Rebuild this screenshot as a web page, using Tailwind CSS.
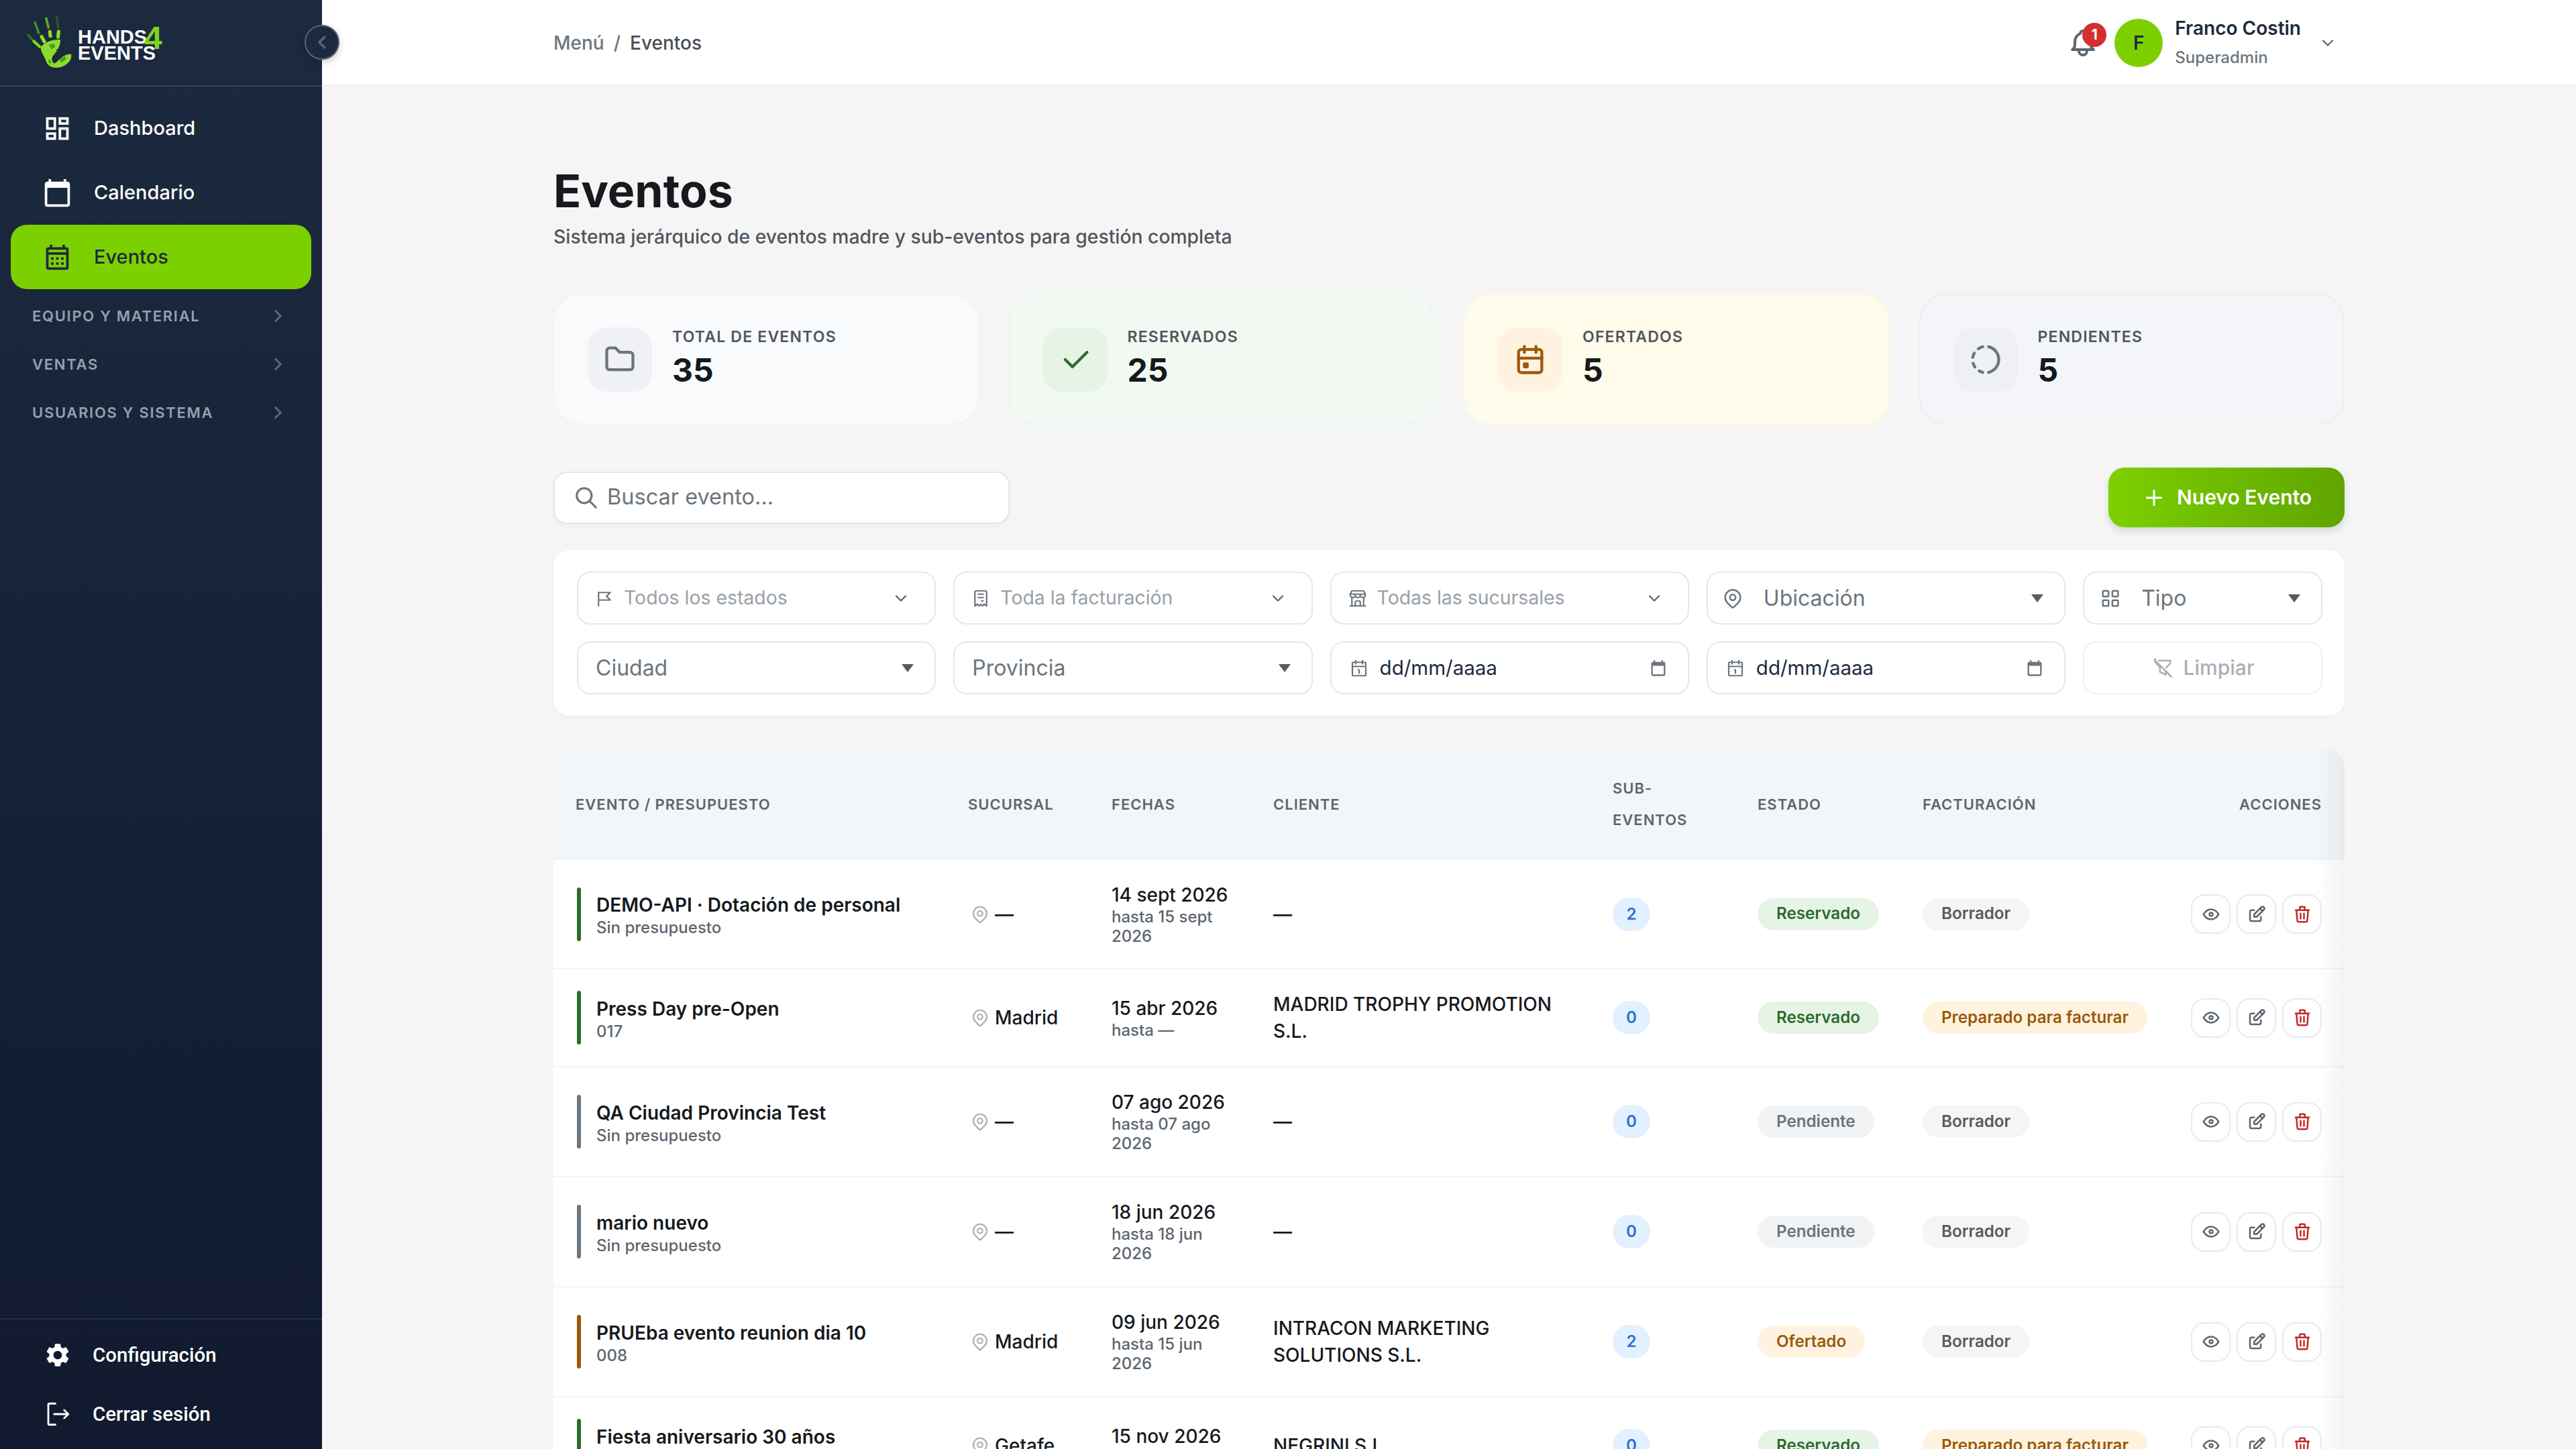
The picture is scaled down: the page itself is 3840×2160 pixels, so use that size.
<!DOCTYPE html>
<html lang="es">
<head>
<meta charset="utf-8">
<title>Eventos</title>
<script src="https://cdn.jsdelivr.net/npm/@tailwindcss/browser@4"></script>
</head>
<body class="w-[3840px] h-[2160px] overflow-hidden bg-[#f5f5f5] font-['Inter','Liberation_Sans',sans-serif] text-[#16191d]">
<svg class="hidden" xmlns="http://www.w3.org/2000/svg">
  <symbol id="bell" viewBox="0 0 24 24"><path d="M10 5a2 2 0 1 1 4 0a7 7 0 0 1 4 6v3a4 4 0 0 0 2 3h-16a4 4 0 0 0 2 -3v-3a7 7 0 0 1 4 -6"/><path d="M9 17v1a3 3 0 0 0 6 0v-1"/></symbol>
  <symbol id="chev" viewBox="0 0 24 24"><path d="M6 9l6 6l6 -6"/></symbol>
  <symbol id="chevr" viewBox="0 0 24 24"><path d="M9 6l6 6l-6 6"/></symbol>
  <symbol id="pin" viewBox="0 0 24 24"><path d="M9 11a3 3 0 1 0 6 0a3 3 0 0 0 -6 0"/><path d="M17.657 16.657l-4.243 4.243a2 2 0 0 1 -2.827 0l-4.244 -4.243a8 8 0 1 1 11.314 0z"/></symbol>
  <symbol id="eye" viewBox="0 0 24 24"><path d="M10 12a2 2 0 1 0 4 0a2 2 0 0 0 -4 0"/><path d="M21 12c-2.4 4 -5.4 6 -9 6c-3.6 0 -6.6 -2 -9 -6c2.4 -4 5.4 -6 9 -6c3.6 0 6.6 2 9 6"/></symbol>
  <symbol id="edit" viewBox="0 0 24 24"><path d="M9 7h-3a2 2 0 0 0 -2 2v9a2 2 0 0 0 2 2h9a2 2 0 0 0 2 -2v-3"/><path d="M9 15h3l8.5 -8.5a1.5 1.5 0 0 0 -3 -3l-8.5 8.5v3"/><path d="M16 5l3 3"/></symbol>
  <symbol id="trash" viewBox="0 0 24 24"><path d="M4 7l16 0"/><path d="M10 11l0 6"/><path d="M14 11l0 6"/><path d="M5 7l1 12a2 2 0 0 0 2 2h8a2 2 0 0 0 2 -2l1 -12"/><path d="M9 7v-3a1 1 0 0 1 1 -1h4a1 1 0 0 1 1 1v3"/></symbol>
  <symbol id="calnum" viewBox="0 0 24 24"><path d="M5 5h14a1 1 0 0 1 1 1v14a1 1 0 0 1 -1 1h-14a1 1 0 0 1 -1 -1v-14a1 1 0 0 1 1 -1z"/><path d="M16 3v4"/><path d="M8 3v4"/><path d="M4 10h16"/><path d="M11 14h1v4"/></symbol>
  <symbol id="caldark" viewBox="0 0 24 24"><path d="M19 4h-1V2h-2v2H8V2H6v2H5a2 2 0 0 0-2 2v14a2 2 0 0 0 2 2h14a2 2 0 0 0 2-2V6a2 2 0 0 0-2-2zm0 16H5V9h14v11z"/></symbol>
  <symbol id="tri" viewBox="0 0 20 14"><path d="M1 1h18l-9 12z"/></symbol>
</svg>

<div class="flex w-[3840px] h-[2160px]">
  <!-- Sidebar -->
  <aside class="relative z-10 flex flex-col w-[480px] h-full shrink-0 bg-linear-to-b from-[#1c2a3f] to-[#111a2e]">
    <div class="relative h-[129px] shrink-0 border-b-2 border-[#3a4350]">
      <div class="flex items-center h-[127px] pl-[36px]">
        <svg width="76" height="84" viewBox="108 66 222 246" class="shrink-0 -mt-[2px]" fill="none" stroke-linecap="round">
          <path d="M125 158L150 185" stroke="#2f7a1e" stroke-width="10"/>
          <path d="M150 185L175 208" stroke="#7fd321" stroke-width="13"/>
          <path d="M155 103L172 150" stroke="#3f9422" stroke-width="10" stroke-dasharray="12 6"/>
          <path d="M184 165L196 186" stroke="#8fdc2a" stroke-width="15"/>
          <path d="M204 85L214 125" stroke="#58ad22" stroke-width="11" stroke-dasharray="14 4"/>
          <path d="M220 143L222 162" stroke="#8fdc2a" stroke-width="15"/>
          <path d="M250 78L256 125" stroke="#2c5a1c" stroke-width="10" stroke-dasharray="10 5"/>
          <path d="M258 142L256 166" stroke="#8fdc2a" stroke-width="15"/>
          <path d="M180 210C200 185 240 175 266 178C268 195 255 225 240 240C225 255 225 270 240 282C260 270 275 240 312 240C320 265 295 290 265 298C235 305 212 295 205 275C198 250 180 235 180 210Z" fill="#8ddb2c"/>
          <path d="M215 200l22 -6l8 14l-18 12zM262 262l24 -12l6 12l-22 16zM212 262l12 6l2 14l-10 -2z" fill="#4f9e1f"/>
          <path d="M250 222l12 4M284 228l8 2M328 205l12 -8" stroke="#1b3a16" stroke-width="5"/>
        </svg>
        <div class="relative w-[140px] h-[60px] ml-[4px] font-['Liberation_Sans',sans-serif] font-bold text-white text-[29px] leading-[24px]">
          <div class="absolute left-0 top-[9px]">HANDS</div>
          <div class="absolute left-0 top-[33px]">EVENTS</div>
          <div class="absolute left-[99px] top-[-1px] text-[#7ed321] text-[48px] leading-[48px]">4</div>
        </div>
      </div>
      <div class="absolute left-[454px] top-[37px] flex items-center justify-center w-[52px] h-[52px] rounded-full bg-[#1c2a3f] border-2 border-[#5a6270] shadow-[0_4px_12px_rgba(0,0,0,0.2)]">
        <svg class="w-[32px] h-[32px] fill-none stroke-[#5e6675] stroke-[2.5]" viewBox="0 0 24 24" stroke-linecap="round" stroke-linejoin="round"><path d="M15 6l-6 6l6 6"/></svg>
      </div>
    </div>

    <nav class="flex flex-col pt-[14px] px-[16px]">
      <a class="flex items-center gap-[32px] h-[96px] pl-[47px] text-white text-[29px] font-medium">
        <svg class="w-[45px] h-[45px] fill-current" viewBox="0 0 24 24"><path d="M19 5v2h-4V5h4M9 5v6H5V5h4m10 8v6h-4v-6h4M9 17v2H5v-2h4M21 3h-8v6h8V3zM11 3H3v10h8V3zm10 8h-8v10h8V11zm-10 4H3v6h8v-6z"/></svg>
        Dashboard
      </a>
      <a class="flex items-center gap-[32px] h-[96px] pl-[47px] text-white text-[29px] font-medium">
        <svg class="w-[45px] h-[45px] fill-current" viewBox="0 0 24 24"><path d="M20 3h-1V1h-2v2H7V1H5v2H4c-1.1 0-2 .9-2 2v16c0 1.1.9 2 2 2h16c1.1 0 2-.9 2-2V5c0-1.1-.9-2-2-2zm0 18H4V8h16v13z"/></svg>
        Calendario
      </a>
      <a class="flex items-center gap-[32px] h-[96px] pl-[47px] rounded-[24px] bg-[#7dd000] text-[#1c2a3f] text-[29px] font-medium">
        <svg class="w-[45px] h-[45px] fill-current" viewBox="0 0 24 24"><path d="M19 4h-1V2h-2v2H8V2H6v2H5c-1.1 0-2 .9-2 2v14c0 1.1.9 2 2 2h14c1.1 0 2-.9 2-2V6c0-1.1-.9-2-2-2zm0 16H5V10h14v10zm0-12H5V6h14v2zM9 14H7v-2h2v2zm4 0h-2v-2h2v2zm4 0h-2v-2h2v2zm-8 4H7v-2h2v2zm4 0h-2v-2h2v2zm4 0h-2v-2h2v2z"/></svg>
        Eventos
      </a>
      <div class="mt-[4px] flex flex-col">
        <div class="flex items-center justify-between h-[72px] pl-[32px] pr-[33px] text-[#96a0ae] text-[22px] font-semibold tracking-[1.7px]">EQUIPO Y MATERIAL<svg class="w-[34px] h-[34px] fill-none stroke-[#5e6675] stroke-[2]"><use href="#chevr"/></svg></div>
        <div class="flex items-center justify-between h-[72px] pl-[32px] pr-[33px] text-[#96a0ae] text-[22px] font-semibold tracking-[1.7px]">VENTAS<svg class="w-[34px] h-[34px] fill-none stroke-[#5e6675] stroke-[2]"><use href="#chevr"/></svg></div>
        <div class="flex items-center justify-between h-[72px] pl-[32px] pr-[33px] text-[#96a0ae] text-[22px] font-semibold tracking-[1.7px]">USUARIOS Y SISTEMA<svg class="w-[34px] h-[34px] fill-none stroke-[#5e6675] stroke-[2]"><use href="#chevr"/></svg></div>
      </div>
    </nav>

    <div class="mt-auto border-t-2 border-[#263244] pt-[9px] pb-[8px]">
      <a class="flex items-center gap-[31px] h-[88px] pl-[65px] text-white text-[29.5px] font-medium font-['Roboto',sans-serif]">
        <svg class="w-[42px] h-[42px] fill-current" viewBox="0 0 24 24"><path d="M19.14 12.94c.04-.3.06-.61.06-.94 0-.32-.02-.64-.07-.94l2.03-1.58a.49.49 0 0 0 .12-.61l-1.92-3.32a.488.488 0 0 0-.59-.22l-2.39.96c-.5-.38-1.03-.7-1.62-.94l-.36-2.54a.484.484 0 0 0-.48-.41h-3.84c-.24 0-.43.17-.47.41l-.36 2.54c-.59.24-1.13.57-1.62.94l-2.39-.96c-.22-.08-.47 0-.59.22L2.74 8.87c-.12.21-.08.47.12.61l2.03 1.58c-.05.3-.09.63-.09.94s.02.64.07.94l-2.03 1.58a.49.49 0 0 0-.12.61l1.92 3.32c.12.22.37.29.59.22l2.39-.96c.5.38 1.03.7 1.62.94l.36 2.54c.05.24.24.41.48.41h3.84c.24 0 .44-.17.47-.41l.36-2.54c.59-.24 1.13-.56 1.62-.94l2.39.96c.22.08.47 0 .59-.22l1.92-3.32c.12-.22.07-.47-.12-.61l-2.01-1.58zM12 15.6c-1.98 0-3.6-1.62-3.6-3.6s1.62-3.6 3.6-3.6 3.6 1.62 3.6 3.6-1.62 3.6-3.6 3.6z"/></svg>
        Configuración
      </a>
      <a class="flex items-center gap-[31px] h-[88px] pl-[65px] text-white text-[29.5px] font-medium font-['Roboto',sans-serif]">
        <svg class="w-[42px] h-[42px] fill-none stroke-current stroke-[1.6]" viewBox="0 0 24 24" stroke-linecap="round" stroke-linejoin="round"><path d="M10 3H5a1 1 0 0 0-1 1v16a1 1 0 0 0 1 1h5"/><path d="M9 12h12"/><path d="M17.5 8.5L21 12l-3.500 3.500"/></svg>
        Cerrar sesión
      </a>
    </div>
  </aside>

  <!-- Main -->
  <div class="flex flex-col flex-1 min-w-0 h-full overflow-hidden">
    <header class="flex items-center justify-between h-[128px] shrink-0 pt-[2px] pl-[345px] pr-[356px] bg-white border-b-2 border-[#eeeff1]">
      <div class="flex items-center gap-[14px] text-[28px] font-medium text-[#6c757d]">
        <span>Menú</span><span>/</span><span class="text-[#495057]">Eventos</span>
      </div>
      <div class="flex items-center">
        <div class="relative w-[48px] h-[48px] text-[#5c6670]">
          <svg class="w-[48px] h-[48px] fill-none stroke-current stroke-[2]" stroke-linecap="round" stroke-linejoin="round"><use href="#bell"/></svg>
          <span class="absolute left-[23px] -top-[6px] flex items-center justify-center w-[36px] h-[36px] rounded-full bg-[#d32f2f] text-white text-[21px] font-bold">1</span>
        </div>
        <div class="flex items-center justify-center w-[72px] h-[72px] ml-[23px] rounded-full bg-[#7dd000] text-[#1c2a3f] text-[28px] font-semibold">F</div>
        <div class="ml-[18px] -mt-[2px] flex flex-col gap-[10px]">
          <div class="text-[28px] leading-[36px] font-semibold text-[#1c2a3f]">Franco Costin</div>
          <div class="text-[24px] leading-[32px] font-medium text-[#6c757d]">Superadmin</div>
        </div>
        <svg class="ml-[26px] w-[28px] h-[28px] fill-none stroke-[#5c6670] stroke-[2]" stroke-linecap="round" stroke-linejoin="round"><use href="#chev"/></svg>
      </div>
    </header>

    <main class="flex flex-col flex-1 min-h-0 pt-[112px] pl-[345px] pr-[345px]">
      <h1 class="text-[68px] leading-[88px] font-bold text-[#16191d]">Eventos</h1>
      <p class="mt-[5px] text-[28.3px] leading-[40px] font-medium text-[#4f565d]">Sistema jerárquico de eventos madre y sub-eventos para gestión completa</p>

      <div class="mt-[65px] grid grid-cols-4 gap-[44px]">
        <div class="flex items-center gap-[30px] h-[195px] pl-[49px] rounded-[40px] bg-[#f8fafc] border-2 border-[#f2f3f5]">
          <div class="flex items-center justify-center w-[96px] h-[96px] rounded-[28px] bg-[#eff1f4] text-[#6c757d]">
            <svg class="w-[52px] h-[52px] fill-none stroke-current stroke-[2]" viewBox="0 0 24 24" stroke-linecap="round" stroke-linejoin="round"><path d="M5 4h4l3 3h7a2 2 0 0 1 2 2v8a2 2 0 0 1 -2 2h-14a2 2 0 0 1 -2 -2v-11a2 2 0 0 1 2 -2"/></svg>
          </div>
          <div class="-mt-[2px]"><div class="text-[23px] leading-[28px] font-semibold tracking-[1.2px] text-[#4f565d]">TOTAL DE EVENTOS</div><div class="mt-[6px] text-[48px] leading-[60px] font-bold">35</div></div>
        </div>
        <div class="flex items-center gap-[30px] h-[195px] pl-[49px] rounded-[40px] bg-[#f2f9f2] border-2 border-[#ecf5ec]">
          <div class="flex items-center justify-center w-[96px] h-[96px] rounded-[28px] bg-[#e6f4e6] text-[#2e6b2e]">
            <svg class="w-[52px] h-[52px] fill-none stroke-current stroke-[2]" viewBox="0 0 24 24" stroke-linecap="round" stroke-linejoin="round"><path d="M5 12l5 5l10 -10"/></svg>
          </div>
          <div class="-mt-[2px]"><div class="text-[23px] leading-[28px] font-semibold tracking-[1.2px] text-[#4f565d]">RESERVADOS</div><div class="mt-[6px] text-[48px] leading-[60px] font-bold">25</div></div>
        </div>
        <div class="flex items-center gap-[30px] h-[195px] pl-[49px] rounded-[40px] bg-[#fefbea] border-2 border-[#fdf8e4]">
          <div class="flex items-center justify-center w-[96px] h-[96px] rounded-[28px] bg-[#fff3e0] text-[#a05a0a]">
            <svg class="w-[52px] h-[52px] fill-none stroke-current stroke-[2]" viewBox="0 0 24 24" stroke-linecap="round" stroke-linejoin="round"><path d="M4 7a2 2 0 0 1 2 -2h12a2 2 0 0 1 2 2v12a2 2 0 0 1 -2 2h-12a2 2 0 0 1 -2 -2v-12z"/><path d="M16 3v4"/><path d="M8 3v4"/><path d="M4 11h16"/><path d="M8 15h2v2h-2z"/></svg>
          </div>
          <div class="-mt-[2px]"><div class="text-[23px] leading-[28px] font-semibold tracking-[1.2px] text-[#4f565d]">OFERTADOS</div><div class="mt-[6px] text-[48px] leading-[60px] font-bold">5</div></div>
        </div>
        <div class="flex items-center gap-[30px] h-[195px] pl-[49px] rounded-[40px] bg-[#f3f5f8] border-2 border-[#eceef1]">
          <div class="flex items-center justify-center w-[96px] h-[96px] rounded-[28px] bg-[#eef0f3] text-[#6c757d]">
            <svg class="w-[52px] h-[52px] fill-none stroke-current stroke-[2]" viewBox="0 0 24 24" stroke-linecap="round" stroke-linejoin="round"><path d="M10 20.777a8.942 8.942 0 0 1 -2.48 -.969"/><path d="M14 3.223a9.003 9.003 0 0 1 0 17.554"/><path d="M4.579 17.093a8.961 8.961 0 0 1 -1.227 -2.592"/><path d="M3.124 10.5c.16 -.95 .468 -1.85 .9 -2.675l.169 -.305"/><path d="M6.907 4.579a8.954 8.954 0 0 1 3.093 -1.356"/></svg>
          </div>
          <div class="-mt-[2px]"><div class="text-[23px] leading-[28px] font-semibold tracking-[1.2px] text-[#4f565d]">PENDIENTES</div><div class="mt-[6px] text-[48px] leading-[60px] font-bold">5</div></div>
        </div>
      </div>

      <div class="mt-[64px] flex items-center justify-between h-[89px]">
        <div class="flex items-center gap-[12px] w-[680px] h-[78px] pl-[28px] rounded-[20px] bg-white border-2 border-[#e6e7e9] shadow-[0_4px_8px_rgba(0,0,0,0.03)] text-[32.5px] text-[#6c757d]">
          <svg class="w-[38px] h-[38px] fill-none stroke-current stroke-[2]" viewBox="0 0 24 24" stroke-linecap="round" stroke-linejoin="round"><path d="M10 10m-7 0a7 7 0 1 0 14 0a7 7 0 1 0 -14 0"/><path d="M21 21l-6 -6"/></svg>
          Buscar evento...
        </div>
        <button class="flex items-center gap-[16px] w-[352px] h-[89px] pl-[50px] rounded-[24px] bg-linear-to-r from-[#7dd000] to-[#5fa500] text-white text-[30px] font-semibold shadow-[0_6px_12px_rgba(0,0,0,0.12)]">
          <svg class="w-[36px] h-[36px] fill-none stroke-current stroke-[2]" viewBox="0 0 24 24" stroke-linecap="round" stroke-linejoin="round"><path d="M12 5l0 14"/><path d="M5 12l14 0"/></svg>
          Nuevo Evento
        </button>
      </div>

      <div class="mt-[34px] grid grid-cols-[3fr_3fr_3fr_3fr_2fr] gap-x-[26px] gap-y-[25px] h-[247px] pl-[35px] pr-[33px] py-[32px] rounded-[24px] bg-white shadow-[0_2px_6px_rgba(0,0,0,0.04)]">
        <div class="flex items-center h-[79px] pl-[24px] pr-[36px] rounded-[20px] border-2 border-[#e6e7e9] text-[#98a0a8] text-[28.4px]">
          <svg class="w-[30px] h-[30px] mr-[14px] fill-none stroke-[#6c757d] stroke-[1.75]" stroke-linecap="round" stroke-linejoin="round" viewBox="0 0 24 24"><path d="M5 14h14l-4.500 -4.500l4.500 -4.500h-14v16"/></svg>
          Todos los estados
          <svg class="ml-auto w-[28px] h-[28px] fill-none stroke-[#5c6670] stroke-[2]" stroke-linecap="round" stroke-linejoin="round"><use href="#chev"/></svg>
        </div>
        <div class="flex items-center h-[79px] pl-[24px] pr-[36px] rounded-[20px] border-2 border-[#e6e7e9] text-[#98a0a8] text-[28.4px]">
          <svg class="w-[30px] h-[30px] mr-[14px] fill-none stroke-[#6c757d] stroke-[1.75]" stroke-linecap="round" stroke-linejoin="round" viewBox="0 0 24 24"><path d="M5 21v-16a2 2 0 0 1 2 -2h10a2 2 0 0 1 2 2v16l-3 -2l-2 2l-2 -2l-2 2l-2 -2l-3 2"/><path d="M9 7h6"/><path d="M9 11h6"/><path d="M13 15h2"/></svg>
          Toda la facturación
          <svg class="ml-auto w-[28px] h-[28px] fill-none stroke-[#5c6670] stroke-[2]" stroke-linecap="round" stroke-linejoin="round"><use href="#chev"/></svg>
        </div>
        <div class="flex items-center h-[79px] pl-[24px] pr-[36px] rounded-[20px] border-2 border-[#e6e7e9] text-[#98a0a8] text-[28.4px]">
          <svg class="w-[30px] h-[30px] mr-[14px] fill-none stroke-[#6c757d] stroke-[1.75]" stroke-linecap="round" stroke-linejoin="round" viewBox="0 0 24 24"><path d="M3 21l18 0"/><path d="M3 7v1a3 3 0 0 0 6 0v-1m0 1a3 3 0 0 0 6 0v-1m0 1a3 3 0 0 0 6 0v-1h-18l2 -4h14l2 4"/><path d="M5 21l0 -10.150"/><path d="M19 21l0 -10.150"/><path d="M9 21v-4a2 2 0 0 1 2 -2h2a2 2 0 0 1 2 2v4"/></svg>
          Todas las sucursales
          <svg class="ml-auto w-[28px] h-[28px] fill-none stroke-[#5c6670] stroke-[2]" stroke-linecap="round" stroke-linejoin="round"><use href="#chev"/></svg>
        </div>
        <div class="flex items-center h-[79px] pl-[20px] pr-[30px] rounded-[20px] border-2 border-[#e6e7e9] text-[#6c757d] text-[32px]">
          <svg class="w-[34px] h-[34px] mr-[29px] fill-none stroke-[#6c757d] stroke-[1.75]" stroke-linecap="round" stroke-linejoin="round"><use href="#pin"/></svg>
          Ubicación
          <svg class="ml-auto w-[20px] h-[14px] fill-[#555b61]"><use href="#tri"/></svg>
        </div>
        <div class="flex items-center h-[79px] pl-[22px] pr-[30px] rounded-[20px] border-2 border-[#e6e7e9] text-[#6c757d] text-[32px]">
          <svg class="w-[34px] h-[34px] mr-[29px] fill-none stroke-[#6c757d] stroke-[1.75]" viewBox="0 0 24 24" stroke-linecap="round" stroke-linejoin="round"><path d="M5 4h4a1 1 0 0 1 1 1v4a1 1 0 0 1 -1 1h-4a1 1 0 0 1 -1 -1v-4a1 1 0 0 1 1 -1z"/><path d="M15 4h4a1 1 0 0 1 1 1v4a1 1 0 0 1 -1 1h-4a1 1 0 0 1 -1 -1v-4a1 1 0 0 1 1 -1z"/><path d="M5 14h4a1 1 0 0 1 1 1v4a1 1 0 0 1 -1 1h-4a1 1 0 0 1 -1 -1v-4a1 1 0 0 1 1 -1z"/><path d="M15 14h4a1 1 0 0 1 1 1v4a1 1 0 0 1 -1 1h-4a1 1 0 0 1 -1 -1v-4a1 1 0 0 1 1 -1z"/></svg>
          Tipo
          <svg class="ml-auto w-[20px] h-[14px] fill-[#555b61]"><use href="#tri"/></svg>
        </div>

        <div class="flex items-center h-[79px] pl-[26px] pr-[30px] rounded-[20px] border-2 border-[#e6e7e9] text-[#6c757d] text-[32px]">Ciudad<svg class="ml-auto w-[20px] h-[14px] fill-[#555b61]"><use href="#tri"/></svg></div>
        <div class="flex items-center h-[79px] pl-[26px] pr-[30px] rounded-[20px] border-2 border-[#e6e7e9] text-[#6c757d] text-[32px]">Provincia<svg class="ml-auto w-[20px] h-[14px] fill-[#555b61]"><use href="#tri"/></svg></div>
        <div class="flex items-center h-[79px] pl-[26px] pr-[30px] rounded-[20px] border-2 border-[#e6e7e9] text-[#1c2a3f] text-[29.5px]">
          <svg class="w-[30px] h-[30px] mr-[16px] fill-none stroke-[#6c757d] stroke-[1.75]" stroke-linecap="round" stroke-linejoin="round"><use href="#calnum"/></svg>
          dd/mm/aaaa
          <svg class="ml-auto w-[28px] h-[28px] fill-[#6c757d]"><use href="#caldark"/></svg>
        </div>
        <div class="flex items-center h-[79px] pl-[26px] pr-[30px] rounded-[20px] border-2 border-[#e6e7e9] text-[#1c2a3f] text-[29.5px]">
          <svg class="w-[30px] h-[30px] mr-[16px] fill-none stroke-[#6c757d] stroke-[1.75]" stroke-linecap="round" stroke-linejoin="round"><use href="#calnum"/></svg>
          dd/mm/aaaa
          <svg class="ml-auto w-[28px] h-[28px] fill-[#6c757d]"><use href="#caldark"/></svg>
        </div>
        <div class="flex items-center justify-center gap-[14px] h-[79px] rounded-[20px] border-2 border-[#eff0f2] text-[#a8afb6] text-[30px] font-medium">
          <svg class="w-[34px] h-[34px] fill-none stroke-current stroke-[1.75]" viewBox="0 0 24 24" stroke-linecap="round" stroke-linejoin="round"><path d="M8 4h12v2.172a2 2 0 0 1 -.586 1.414l-3.914 3.914m-.5 3.500v4l-6 -3v-5l-4.480 -4.928a2 2 0 0 1 -.520 -1.345v-2.227"/><path d="M3 3l18 18"/></svg>
          Limpiar
        </div>
      </div>

      <div class="relative mt-[51px] shrink-0 rounded-t-[24px] overflow-hidden bg-white">
        <table class="w-[2670px] table-fixed border-collapse text-left">
          <colgroup><col class="w-[585px]"><col class="w-[214px]"><col class="w-[241px]"><col class="w-[506px]"><col class="w-[216px]"><col class="w-[246px]"><col class="w-[400px]"><col class="w-[262px]"></colgroup>
          <thead class="bg-[#f3f6f9] text-[22px] leading-[47px] font-semibold tracking-[1px] text-[#5c6670]">
            <tr class="h-[163px] border-b-2 border-[#eff1f3]">
              <th class="pl-[33px] font-semibold">EVENTO / PRESUPUESTO</th>
              <th class="pl-[33px] font-semibold">SUCURSAL</th>
              <th class="pl-[33px] font-semibold">FECHAS</th>
              <th class="pl-[33px] font-semibold">CLIENTE</th>
              <th class="pl-[33px] font-semibold">SUB-<br>EVENTOS</th>
              <th class="pl-[33px] font-semibold">ESTADO</th>
              <th class="pl-[33px] font-semibold">FACTURACIÓN</th>
              <th class="pr-[34px] text-right font-semibold">ACCIONES</th>
            </tr>
          </thead>
          <tbody class="text-[28px]">
            <!-- Row 1 -->
            <tr class="h-[163px] border-b-2 border-[#f3f4f6]">
              <td class="pl-[35px]"><div class="flex items-center gap-[23px]"><span class="w-[6px] h-[80px] rounded-full bg-[#2e6b2e]"></span><div class="pt-[3px]"><div class="text-[28px] leading-[38px] font-semibold">DEMO-API · Dotación de personal</div><div class="text-[24px] leading-[30px] font-medium text-[#5c6670]">Sin presupuesto</div></div></div></td>
              <td class="pl-[36px]"><div class="flex items-center gap-[7px] font-medium"><svg class="w-[30px] h-[30px] fill-none stroke-[#a8afb6] stroke-[1.75]" stroke-linecap="round" stroke-linejoin="round"><use href="#pin"/></svg>—</div></td>
              <td class="pl-[33px]"><div class="font-medium leading-[36px]">14 sept 2026</div><div class="text-[24px] leading-[29px] font-medium text-[#5c6670]">hasta 15 sept<br>2026</div></td>
              <td class="pl-[33px] font-medium leading-[40px]">—</td>
              <td class="pl-[33px]"><span class="flex items-center justify-center w-[56px] h-[50px] rounded-full bg-[#e3f0ff] text-[#2a73c9] text-[24px] font-semibold">2</span></td>
              <td class="pl-[33px]"><span class="inline-flex items-center h-[48px] px-[28px] rounded-full bg-[#e6f4e6] text-[#2e6b2e] text-[24.2px] font-semibold">Reservado</span></td>
              <td class="pl-[33px]"><span class="inline-flex items-center h-[48px] px-[28px] rounded-full bg-[#f5f5f5] text-[#555b61] text-[24.2px] font-semibold">Borrador</span></td>
              <td class="pr-[34px]"><div class="flex justify-end gap-[9px]"><span class="flex items-center justify-center w-[59px] h-[59px] rounded-[20px] border-2 border-[#e9eaec] text-[#5c6670]"><svg class="w-[30px] h-[30px] fill-none stroke-current stroke-[2]" stroke-linecap="round" stroke-linejoin="round"><use href="#eye"/></svg></span><span class="flex items-center justify-center w-[59px] h-[59px] rounded-[20px] border-2 border-[#e9eaec] text-[#5c6670]"><svg class="w-[30px] h-[30px] fill-none stroke-current stroke-[2]" stroke-linecap="round" stroke-linejoin="round"><use href="#edit"/></svg></span><span class="flex items-center justify-center w-[59px] h-[59px] rounded-[20px] border-2 border-[#e9eaec] text-[#c62828]"><svg class="w-[30px] h-[30px] fill-none stroke-current stroke-[2]" stroke-linecap="round" stroke-linejoin="round"><use href="#trash"/></svg></span></div></td>
            </tr>
            <!-- Row 2 -->
            <tr class="h-[146px] border-b-2 border-[#f3f4f6]">
              <td class="pl-[35px]"><div class="flex items-center gap-[23px]"><span class="w-[6px] h-[80px] rounded-full bg-[#2e6b2e]"></span><div class="pt-[3px]"><div class="text-[28px] leading-[38px] font-semibold">Press Day pre-Open</div><div class="text-[24px] leading-[30px] font-medium text-[#5c6670]">017</div></div></div></td>
              <td class="pl-[36px]"><div class="flex items-center gap-[7px] font-medium"><svg class="w-[30px] h-[30px] fill-none stroke-[#a8afb6] stroke-[1.75]" stroke-linecap="round" stroke-linejoin="round"><use href="#pin"/></svg>Madrid</div></td>
              <td class="pl-[33px]"><div class="font-medium leading-[36px]">15 abr 2026</div><div class="text-[24px] leading-[29px] font-medium text-[#5c6670]">hasta —</div></td>
              <td class="pl-[33px] font-medium leading-[40px]">MADRID TROPHY PROMOTION S.L.</td>
              <td class="pl-[33px]"><span class="flex items-center justify-center w-[56px] h-[50px] rounded-full bg-[#e3f0ff] text-[#2a73c9] text-[24px] font-semibold">0</span></td>
              <td class="pl-[33px]"><span class="inline-flex items-center h-[48px] px-[28px] rounded-full bg-[#e6f4e6] text-[#2e6b2e] text-[24.2px] font-semibold">Reservado</span></td>
              <td class="pl-[33px]"><span class="inline-flex items-center h-[48px] px-[28px] rounded-full bg-[#fff3e0] text-[#9a5a0a] text-[24.2px] font-semibold">Preparado para facturar</span></td>
              <td class="pr-[34px]"><div class="flex justify-end gap-[9px]"><span class="flex items-center justify-center w-[59px] h-[59px] rounded-[20px] border-2 border-[#e9eaec] text-[#5c6670]"><svg class="w-[30px] h-[30px] fill-none stroke-current stroke-[2]" stroke-linecap="round" stroke-linejoin="round"><use href="#eye"/></svg></span><span class="flex items-center justify-center w-[59px] h-[59px] rounded-[20px] border-2 border-[#e9eaec] text-[#5c6670]"><svg class="w-[30px] h-[30px] fill-none stroke-current stroke-[2]" stroke-linecap="round" stroke-linejoin="round"><use href="#edit"/></svg></span><span class="flex items-center justify-center w-[59px] h-[59px] rounded-[20px] border-2 border-[#e9eaec] text-[#c62828]"><svg class="w-[30px] h-[30px] fill-none stroke-current stroke-[2]" stroke-linecap="round" stroke-linejoin="round"><use href="#trash"/></svg></span></div></td>
            </tr>
            <!-- Row 3 -->
            <tr class="h-[164px] border-b-2 border-[#f3f4f6]">
              <td class="pl-[35px]"><div class="flex items-center gap-[23px]"><span class="w-[6px] h-[80px] rounded-full bg-[#6c757d]"></span><div class="pt-[3px]"><div class="text-[28px] leading-[38px] font-semibold">QA Ciudad Provincia Test</div><div class="text-[24px] leading-[30px] font-medium text-[#5c6670]">Sin presupuesto</div></div></div></td>
              <td class="pl-[36px]"><div class="flex items-center gap-[7px] font-medium"><svg class="w-[30px] h-[30px] fill-none stroke-[#a8afb6] stroke-[1.75]" stroke-linecap="round" stroke-linejoin="round"><use href="#pin"/></svg>—</div></td>
              <td class="pl-[33px]"><div class="font-medium leading-[36px]">07 ago 2026</div><div class="text-[24px] leading-[29px] font-medium text-[#5c6670]">hasta 07 ago<br>2026</div></td>
              <td class="pl-[33px] font-medium leading-[40px]">—</td>
              <td class="pl-[33px]"><span class="flex items-center justify-center w-[56px] h-[50px] rounded-full bg-[#e3f0ff] text-[#2a73c9] text-[24px] font-semibold">0</span></td>
              <td class="pl-[33px]"><span class="inline-flex items-center h-[48px] px-[28px] rounded-full bg-[#f1f3f5] text-[#6c757d] text-[24.2px] font-semibold">Pendiente</span></td>
              <td class="pl-[33px]"><span class="inline-flex items-center h-[48px] px-[28px] rounded-full bg-[#f5f5f5] text-[#555b61] text-[24.2px] font-semibold">Borrador</span></td>
              <td class="pr-[34px]"><div class="flex justify-end gap-[9px]"><span class="flex items-center justify-center w-[59px] h-[59px] rounded-[20px] border-2 border-[#e9eaec] text-[#5c6670]"><svg class="w-[30px] h-[30px] fill-none stroke-current stroke-[2]" stroke-linecap="round" stroke-linejoin="round"><use href="#eye"/></svg></span><span class="flex items-center justify-center w-[59px] h-[59px] rounded-[20px] border-2 border-[#e9eaec] text-[#5c6670]"><svg class="w-[30px] h-[30px] fill-none stroke-current stroke-[2]" stroke-linecap="round" stroke-linejoin="round"><use href="#edit"/></svg></span><span class="flex items-center justify-center w-[59px] h-[59px] rounded-[20px] border-2 border-[#e9eaec] text-[#c62828]"><svg class="w-[30px] h-[30px] fill-none stroke-current stroke-[2]" stroke-linecap="round" stroke-linejoin="round"><use href="#trash"/></svg></span></div></td>
            </tr>
            <!-- Row 4 -->
            <tr class="h-[164px] border-b-2 border-[#f3f4f6]">
              <td class="pl-[35px]"><div class="flex items-center gap-[23px]"><span class="w-[6px] h-[80px] rounded-full bg-[#6c757d]"></span><div class="pt-[3px]"><div class="text-[28px] leading-[38px] font-semibold">mario nuevo</div><div class="text-[24px] leading-[30px] font-medium text-[#5c6670]">Sin presupuesto</div></div></div></td>
              <td class="pl-[36px]"><div class="flex items-center gap-[7px] font-medium"><svg class="w-[30px] h-[30px] fill-none stroke-[#a8afb6] stroke-[1.75]" stroke-linecap="round" stroke-linejoin="round"><use href="#pin"/></svg>—</div></td>
              <td class="pl-[33px]"><div class="font-medium leading-[36px]">18 jun 2026</div><div class="text-[24px] leading-[29px] font-medium text-[#5c6670]">hasta 18 jun<br>2026</div></td>
              <td class="pl-[33px] font-medium leading-[40px]">—</td>
              <td class="pl-[33px]"><span class="flex items-center justify-center w-[56px] h-[50px] rounded-full bg-[#e3f0ff] text-[#2a73c9] text-[24px] font-semibold">0</span></td>
              <td class="pl-[33px]"><span class="inline-flex items-center h-[48px] px-[28px] rounded-full bg-[#f1f3f5] text-[#6c757d] text-[24.2px] font-semibold">Pendiente</span></td>
              <td class="pl-[33px]"><span class="inline-flex items-center h-[48px] px-[28px] rounded-full bg-[#f5f5f5] text-[#555b61] text-[24.2px] font-semibold">Borrador</span></td>
              <td class="pr-[34px]"><div class="flex justify-end gap-[9px]"><span class="flex items-center justify-center w-[59px] h-[59px] rounded-[20px] border-2 border-[#e9eaec] text-[#5c6670]"><svg class="w-[30px] h-[30px] fill-none stroke-current stroke-[2]" stroke-linecap="round" stroke-linejoin="round"><use href="#eye"/></svg></span><span class="flex items-center justify-center w-[59px] h-[59px] rounded-[20px] border-2 border-[#e9eaec] text-[#5c6670]"><svg class="w-[30px] h-[30px] fill-none stroke-current stroke-[2]" stroke-linecap="round" stroke-linejoin="round"><use href="#edit"/></svg></span><span class="flex items-center justify-center w-[59px] h-[59px] rounded-[20px] border-2 border-[#e9eaec] text-[#c62828]"><svg class="w-[30px] h-[30px] fill-none stroke-current stroke-[2]" stroke-linecap="round" stroke-linejoin="round"><use href="#trash"/></svg></span></div></td>
            </tr>
            <!-- Row 5 -->
            <tr class="h-[164px] border-b-2 border-[#f3f4f6]">
              <td class="pl-[35px]"><div class="flex items-center gap-[23px]"><span class="w-[6px] h-[80px] rounded-full bg-[#9a5a0a]"></span><div class="pt-[3px]"><div class="text-[28px] leading-[38px] font-semibold">PRUEba evento reunion dia 10</div><div class="text-[24px] leading-[30px] font-medium text-[#5c6670]">008</div></div></div></td>
              <td class="pl-[36px]"><div class="flex items-center gap-[7px] font-medium"><svg class="w-[30px] h-[30px] fill-none stroke-[#a8afb6] stroke-[1.75]" stroke-linecap="round" stroke-linejoin="round"><use href="#pin"/></svg>Madrid</div></td>
              <td class="pl-[33px]"><div class="font-medium leading-[36px]">09 jun 2026</div><div class="text-[24px] leading-[29px] font-medium text-[#5c6670]">hasta 15 jun<br>2026</div></td>
              <td class="pl-[33px] font-medium leading-[40px]">INTRACON MARKETING SOLUTIONS S.L.</td>
              <td class="pl-[33px]"><span class="flex items-center justify-center w-[56px] h-[50px] rounded-full bg-[#e3f0ff] text-[#2a73c9] text-[24px] font-semibold">2</span></td>
              <td class="pl-[33px]"><span class="inline-flex items-center h-[48px] px-[28px] rounded-full bg-[#fff3e0] text-[#9a5a0a] text-[24.2px] font-semibold">Ofertado</span></td>
              <td class="pl-[33px]"><span class="inline-flex items-center h-[48px] px-[28px] rounded-full bg-[#f5f5f5] text-[#555b61] text-[24.2px] font-semibold">Borrador</span></td>
              <td class="pr-[34px]"><div class="flex justify-end gap-[9px]"><span class="flex items-center justify-center w-[59px] h-[59px] rounded-[20px] border-2 border-[#e9eaec] text-[#5c6670]"><svg class="w-[30px] h-[30px] fill-none stroke-current stroke-[2]" stroke-linecap="round" stroke-linejoin="round"><use href="#eye"/></svg></span><span class="flex items-center justify-center w-[59px] h-[59px] rounded-[20px] border-2 border-[#e9eaec] text-[#5c6670]"><svg class="w-[30px] h-[30px] fill-none stroke-current stroke-[2]" stroke-linecap="round" stroke-linejoin="round"><use href="#edit"/></svg></span><span class="flex items-center justify-center w-[59px] h-[59px] rounded-[20px] border-2 border-[#e9eaec] text-[#c62828]"><svg class="w-[30px] h-[30px] fill-none stroke-current stroke-[2]" stroke-linecap="round" stroke-linejoin="round"><use href="#trash"/></svg></span></div></td>
            </tr>
            <!-- Row 6 -->
            <tr class="h-[146px] border-b-2 border-[#f3f4f6]">
              <td class="pl-[35px]"><div class="flex items-center gap-[23px]"><span class="w-[6px] h-[80px] rounded-full bg-[#2e6b2e]"></span><div class="pt-[3px]"><div class="text-[28px] leading-[38px] font-semibold">Fiesta aniversario 30 años</div><div class="h-[30px]"></div></div></div></td>
              <td class="pl-[36px]"><div class="flex items-center gap-[7px] font-medium"><svg class="w-[30px] h-[30px] fill-none stroke-[#a8afb6] stroke-[1.75]" stroke-linecap="round" stroke-linejoin="round"><use href="#pin"/></svg>Getafe</div></td>
              <td class="pl-[33px]"><div class="font-medium leading-[36px]">15 nov 2026</div><div class="h-[29px]"></div></td>
              <td class="pl-[33px] font-medium leading-[40px]">NEGRINI S.L.</td>
              <td class="pl-[33px]"><span class="flex items-center justify-center w-[56px] h-[50px] rounded-full bg-[#e3f0ff] text-[#2a73c9] text-[24px] font-semibold">0</span></td>
              <td class="pl-[33px]"><span class="inline-flex items-center h-[48px] px-[28px] rounded-full bg-[#e6f4e6] text-[#2e6b2e] text-[24.2px] font-semibold">Reservado</span></td>
              <td class="pl-[33px]"><span class="inline-flex items-center h-[48px] px-[28px] rounded-full bg-[#fff3e0] text-[#9a5a0a] text-[24.2px] font-semibold">Preparado para facturar</span></td>
              <td class="pr-[34px]"><div class="flex justify-end gap-[9px]"><span class="flex items-center justify-center w-[59px] h-[59px] rounded-[20px] border-2 border-[#e9eaec] text-[#5c6670]"><svg class="w-[30px] h-[30px] fill-none stroke-current stroke-[2]" stroke-linecap="round" stroke-linejoin="round"><use href="#eye"/></svg></span><span class="flex items-center justify-center w-[59px] h-[59px] rounded-[20px] border-2 border-[#e9eaec] text-[#5c6670]"><svg class="w-[30px] h-[30px] fill-none stroke-current stroke-[2]" stroke-linecap="round" stroke-linejoin="round"><use href="#edit"/></svg></span><span class="flex items-center justify-center w-[59px] h-[59px] rounded-[20px] border-2 border-[#e9eaec] text-[#c62828]"><svg class="w-[30px] h-[30px] fill-none stroke-current stroke-[2]" stroke-linecap="round" stroke-linejoin="round"><use href="#trash"/></svg></span></div></td>
            </tr>
          </tbody>
        </table>
        <div class="absolute inset-y-0 right-0 w-[44px] pointer-events-none bg-linear-to-r from-black/0 to-black/[0.045]"></div>
      </div>
    </main>
  </div>
</div>
</body>
</html>
